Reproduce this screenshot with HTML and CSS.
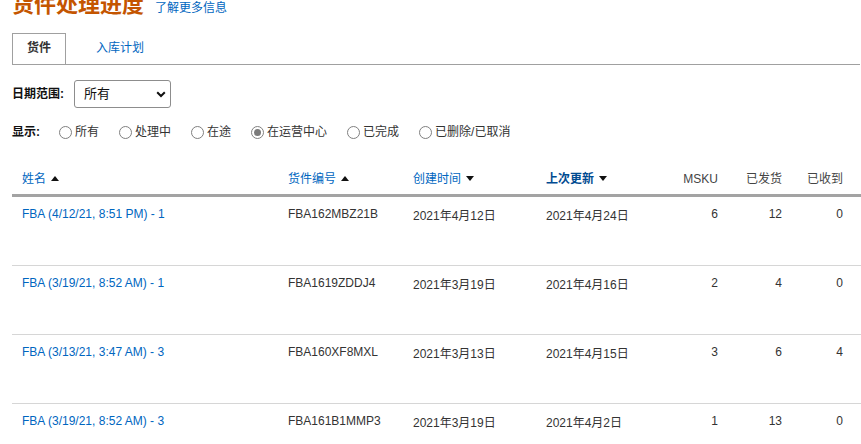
FILE: index.html
```html
<!DOCTYPE html>
<html lang="zh-CN">
<head>
<meta charset="utf-8">
<title>货件处理进度</title>
<link rel="stylesheet" href="styles.css">
</head>
<body>
<div class="page">
  <div class="title-row">
    <h1 class="title">货件处理进度</h1>
    <a class="more" href="#">了解更多信息</a>
  </div>

  <div class="tabs">
    <a class="tab active" href="#">货件</a>
    <a class="tab" href="#">入库计划</a>
  </div>

  <div class="filter-row">
    <span class="label">日期范围:</span>
    <div class="select">
      <span class="select-text">所有</span>
      <svg class="chevron" width="10" height="7" viewBox="0 0 10 7"><path d="M1.2 1.2 L5 5 L8.8 1.2" fill="none" stroke="#111" stroke-width="2"/></svg>
    </div>
  </div>

  <div class="radio-row">
    <span class="label">显示:</span>
    <span class="radio"><span class="circle"></span>所有</span>
    <span class="radio"><span class="circle"></span>处理中</span>
    <span class="radio"><span class="circle"></span>在途</span>
    <span class="radio"><span class="circle checked"></span>在运营中心</span>
    <span class="radio"><span class="circle"></span>已完成</span>
    <span class="radio"><span class="circle"></span>已删除/已取消</span>
  </div>

  <table class="grid">
    <colgroup>
      <col class="c-name"><col class="c-id"><col class="c-created"><col class="c-updated"><col class="c-num"><col class="c-num"><col class="c-last">
    </colgroup>
    <thead>
      <tr>
        <th><a href="#">姓名</a><span class="tri up"></span></th>
        <th><a href="#">货件编号</a><span class="tri up"></span></th>
        <th><a href="#">创建时间</a><span class="tri down"></span></th>
        <th><a href="#" class="sorted">上次更新</a><span class="tri down"></span></th>
        <th class="num">MSKU</th>
        <th class="num">已发货</th>
        <th class="num last">已收到</th>
      </tr>
    </thead>
    <tbody>
      <tr>
        <td><a href="#">FBA (4/12/21, 8:51 PM) - 1</a></td>
        <td>FBA162MBZ21B</td>
        <td class="date">2021年4月12日</td>
        <td class="date">2021年4月24日</td>
        <td class="num">6</td>
        <td class="num">12</td>
        <td class="num last">0</td>
      </tr>
      <tr>
        <td><a href="#">FBA (3/19/21, 8:52 AM) - 1</a></td>
        <td>FBA1619ZDDJ4</td>
        <td class="date">2021年3月19日</td>
        <td class="date">2021年4月16日</td>
        <td class="num">2</td>
        <td class="num">4</td>
        <td class="num last">0</td>
      </tr>
      <tr>
        <td><a href="#">FBA (3/13/21, 3:47 AM) - 3</a></td>
        <td>FBA160XF8MXL</td>
        <td class="date">2021年3月13日</td>
        <td class="date">2021年4月15日</td>
        <td class="num">3</td>
        <td class="num">6</td>
        <td class="num last">4</td>
      </tr>
      <tr>
        <td><a href="#">FBA (3/19/21, 8:52 AM) - 3</a></td>
        <td>FBA161B1MMP3</td>
        <td class="date">2021年3月19日</td>
        <td class="date">2021年4月2日</td>
        <td class="num">1</td>
        <td class="num">13</td>
        <td class="num last">0</td>
      </tr>
    </tbody>
  </table>
</div>
</body>
</html>
```

FILE: styles.css
```css
* { box-sizing: border-box; }

html, body {
  margin: 0;
  padding: 0;
  background: #fff;
  overflow: hidden;
}

body {
  font-family: "Liberation Sans", "Noto Sans CJK SC", sans-serif;
  font-size: 12px;
  line-height: 16px;
  color: #333;
}

a { text-decoration: none; color: #0066c0; }

.page {
  padding-left: 12px;
  width: 861px;
}

/* title */
.title-row {
  display: flex;
  align-items: baseline;
  gap: 11px;
  margin-top: -6px;
}
.title {
  margin: 0;
  font-size: 22px;
  line-height: 22px;
  font-weight: bold;
  color: #c45500;
}
.more {
  font-size: 12px;
  line-height: 16px;
}

/* tabs */
.tabs {
  display: flex;
  margin-top: 17px;
  border-bottom: 1px solid #a0a0a0;
  margin-right: 1px;
}
.tab {
  display: block;
  padding: 6px 14px 8px;
  border: 1px solid transparent;
  border-bottom: 0;
  font-size: 12px;
  line-height: 16px;
  color: #0066c0;
}
.tab.active {
  border-color: #a0a0a0;
  color: #333;
  font-weight: bold;
}
.tab + .tab { margin-left: 15px; }

/* filter */
.filter-row {
  display: flex;
  align-items: center;
  margin-top: 15px;
}
.label {
  font-weight: bold;
  color: #111;
}
.select {
  margin-left: 10px;
  width: 97px;
  height: 28px;
  border: 1px solid #8d8d8d;
  border-radius: 3px;
  display: flex;
  align-items: center;
  justify-content: space-between;
  padding: 0 4px 0 9px;
  color: #111;
  font-size: 13px;
}
.chevron { display: block; }

/* radios */
.radio-row {
  display: flex;
  align-items: center;
  margin-top: 16px;
}
.radio-row .label { margin-right: 19px; }
.radio {
  display: flex;
  align-items: center;
  margin-right: 20px;
  color: #333;
}
.circle {
  width: 13px;
  height: 13px;
  border: 1px solid #808080;
  border-radius: 50%;
  margin-right: 3px;
  display: flex;
  align-items: center;
  justify-content: center;
  background: #fff;
}
.circle.checked::after {
  content: "";
  width: 7px;
  height: 7px;
  border-radius: 50%;
  background: #7a7a7a;
}

/* table */
.grid {
  margin-top: 21px;
  width: 849px;
  border-collapse: separate;
  border-spacing: 0;
  table-layout: fixed;
}
.c-name { width: 266px; }
.c-id { width: 125px; }
.c-created { width: 133px; }
.c-updated { width: 128px; }
.c-num { width: 64px; }
.c-last { width: 69px; }

.grid th {
  text-align: left;
  font-weight: normal;
  padding: 10px 10px 7px;
  border-bottom: 3px solid #a3a3a3;
  white-space: nowrap;
  color: #444;
}
.grid th a { color: #0066c0; }
.grid th a.sorted { color: #004b91; font-weight: bold; }

.tri {
  display: inline-block;
  width: 0;
  height: 0;
  margin-left: 5px;
  vertical-align: middle;
  border-left: 4px solid transparent;
  border-right: 4px solid transparent;
}
.tri.up { border-bottom: 5px solid #111; position: relative; top: -1px; }
.tri.down { border-top: 5px solid #111; position: relative; top: -1px; }

.grid td {
  padding: 9px 10px 43px;
  border-bottom: 1px solid #d6d6d6;
  vertical-align: top;
  white-space: nowrap;
  color: #333;
}
.grid td.date {
  padding-top: 11px;
  padding-bottom: 41px;
}
.grid .num { text-align: right; }
.grid .num.last { padding-right: 18px; }
```
